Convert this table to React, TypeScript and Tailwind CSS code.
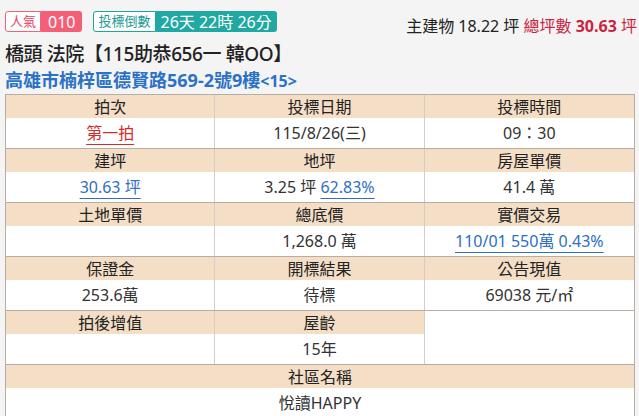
import React from "react";

const H = "bg-[#f4dec6] h-[23px] flex items-center justify-center text-[16px] text-[#222]";
const V = "bg-white h-[30px] flex items-center justify-center text-[16px] text-[#333]";

function Pair({ label, value, last }: { label: string; value: React.ReactNode; last?: boolean }) {
  return (
    <div className={`flex flex-col ${last ? "" : "border-r border-[#d6cdc2]"}`}>
      <div className={H}>{label}</div>
      <div className={V}>{value}</div>
    </div>
  );
}

function Row({ children }: { children: React.ReactNode }) {
  return <div className="grid grid-cols-3 border-b border-[#b8ada2]">{children}</div>;
}

const Blue = ({ children }: { children: React.ReactNode }) => (
  <span className="text-[#2f6fc0] underline underline-offset-[5px] decoration-[#2f6fc0]">{children}</span>
);

export default function App() {
  return (
    <div
      className="w-[639px] h-[416px] bg-[#f4f4f4] overflow-hidden"
      style={{ fontFamily: '"Noto Sans", "Noto Sans CJK TC", sans-serif' }}
    >
      <div className="flex justify-between pt-[11px] pl-[5px] pr-[2px] h-[40px]">
        <div className="flex gap-[11px]">
          <div className="flex h-[21px] leading-none">
            <span className="border border-[#f2637b] bg-white text-[#e8405e] px-[4px] flex items-center rounded-l-[3px] text-[13px]">人氣</span>
            <span className="bg-[#f45f78] text-white px-[7px] flex items-center rounded-r-[3px] text-[16px]">010</span>
          </div>
          <div className="flex h-[21px] leading-none">
            <span className="border border-[#1aa7a0] bg-white text-[#1a9a94] px-[4px] flex items-center rounded-l-[3px] text-[13px]">投標倒數</span>
            <span className="bg-[#1fa9a2] text-white px-[5px] flex items-center rounded-r-[3px] text-[16px]">26天 22時 26分</span>
          </div>
        </div>
        <div className="text-[16px] text-[#222] pt-[3px] whitespace-nowrap">
          主建物 18.22 坪 <span className="text-[#c9243f]">總坪數 <b>30.63</b> 坪</span>
        </div>
      </div>
      <div className="pl-[5px] text-[19px] text-[#222] leading-[26px] font-medium mt-[1px] tracking-[-0.4px]">橋頭 法院【115助恭656一 韓OO】</div>
      <div className="pl-[5px] text-[18px] text-[#2b72c6] leading-[26px] font-bold">
        高雄市楠梓區德賢路569-2號9樓<span className="text-[16px]">&lt;15&gt;</span>
      </div>
      <div className="ml-[5px] mr-[4px] border-l border-t border-r border-[#b8ada2] bg-white">
        <Row>
          <Pair label="拍次" value={<span className="text-[#d42b2b] underline underline-offset-[5px] decoration-[#d42b2b]">第一拍</span>} />
          <Pair label="投標日期" value="115/8/26(三)" />
          <Pair label="投標時間" value="09：30" last />
        </Row>
        <Row>
          <Pair label="建坪" value={<Blue>30.63 坪</Blue>} />
          <Pair label="地坪" value={<span>3.25 坪 <Blue>62.83%</Blue></span>} />
          <Pair label="房屋單價" value="41.4 萬" last />
        </Row>
        <Row>
          <Pair label="土地單價" value="" />
          <Pair label="總底價" value="1,268.0 萬" />
          <Pair label="實價交易" value={<Blue>110/01 550萬 0.43%</Blue>} last />
        </Row>
        <Row>
          <Pair label="保證金" value="253.6萬" />
          <Pair label="開標結果" value="待標" />
          <Pair label="公告現值" value="69038 元/㎡" last />
        </Row>
        <Row>
          <Pair label="拍後增值" value="" />
          <Pair label="屋齡" value="15年" />
          <div className="bg-white" />
        </Row>
        <div className="flex flex-col">
          <div className={H}>社區名稱</div>
          <div className={V}>悅讀HAPPY</div>
        </div>
      </div>
    </div>
  );
}
